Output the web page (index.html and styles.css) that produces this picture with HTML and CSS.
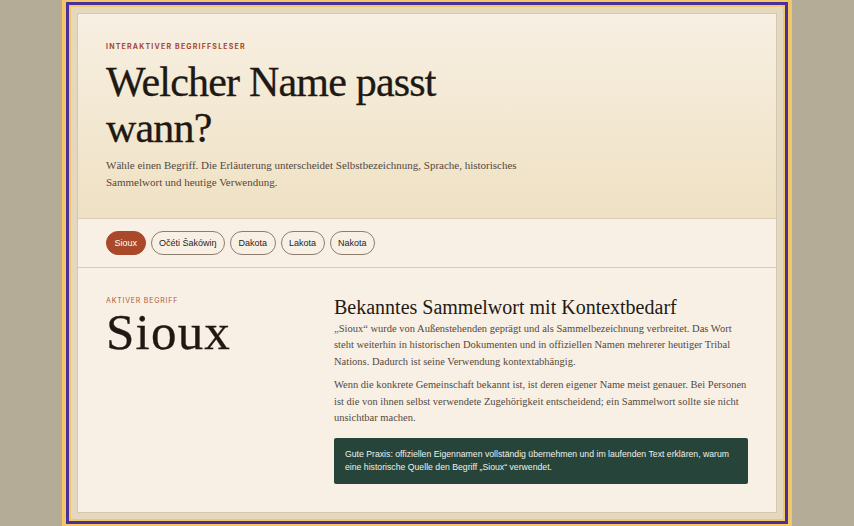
FILE: index.html
```html
<!DOCTYPE html>
<html lang="de">
<head>
<meta charset="utf-8">
<title>Welcher Name passt wann?</title>
<link rel="stylesheet" href="styles.css">
</head>
<body>
<div class="frame">
  <div class="ring">
    <div class="mat">
      <main class="card">
        <header class="hero">
          <p class="eyebrow">Interaktiver Begriffsleser</p>
          <h1 class="title">Welcher Name passt wann?</h1>
          <p class="lead">Wähle einen Begriff. Die Erläuterung unterscheidet Selbstbezeichnung, Sprache, historisches Sammelwort und heutige Verwendung.</p>
        </header>
        <nav class="tabs">
          <button class="pill active">Sioux</button>
          <button class="pill">Očéti Šakówiŋ</button>
          <button class="pill">Dakota</button>
          <button class="pill">Lakota</button>
          <button class="pill">Nakota</button>
        </nav>
        <section class="detail">
          <div class="term">
            <p class="term-label">Aktiver Begriff</p>
            <p class="term-name">Sioux</p>
          </div>
          <div class="explain">
            <h2 class="explain-title">Bekanntes Sammelwort mit Kontextbedarf</h2>
            <p class="body">„Sioux“ wurde von Außenstehenden geprägt und als Sammelbezeichnung verbreitet. Das Wort steht weiterhin in historischen Dokumenten und in offiziellen Namen mehrerer heutiger Tribal Nations. Dadurch ist seine Verwendung kontextabhängig.</p>
            <p class="body second">Wenn die konkrete Gemeinschaft bekannt ist, ist deren eigener Name meist genauer. Bei Personen ist die von ihnen selbst verwendete Zugehörigkeit entscheidend; ein Sammelwort sollte sie nicht unsichtbar machen.</p>
            <div class="note">Gute Praxis: offiziellen Eigennamen vollständig übernehmen und im laufenden Text erklären, warum eine historische Quelle den Begriff „Sioux“ verwendet.</div>
          </div>
        </section>
      </main>
    </div>
  </div>
</div>
</body>
</html>
```
FILE: styles.css
```css
html, body {
  margin: 0;
  padding: 0;
}
body {
  background: #b5ac97;
  font-family: "Liberation Serif", serif;
  overflow: hidden;
}
.frame {
  width: 730px;
  box-sizing: border-box;
  margin: -2px auto 0;
  border: 4px solid #f2c765;
}
.ring {
  border: 3px solid #4b2f9f;
}
.mat {
  border: 2px solid #f2c765;
  background: #e4d8c0;
  padding: 6px;
}
.card {
  display: block;
  border: 1px solid #d4c8af;
  background: #f8f0e5;
  min-height: 498px;
}
.hero {
  padding: 28px 28px 27px;
  background: linear-gradient(180deg, #f7efe2 0%, #efe1c3 100%);
  border-bottom: 1px solid #d8ccb6;
}
.eyebrow {
  margin: 0;
  font-family: Inter, "Liberation Sans", sans-serif;
  font-size: 7px;
  line-height: 10px;
  font-weight: 700;
  letter-spacing: 1.2px;
  text-transform: uppercase;
  color: #a9492a;
}
.title {
  margin: 7px 0 0;
  max-width: 380px;
  font-family: "Liberation Serif", serif;
  font-weight: 400;
  font-size: 42px;
  line-height: 46px;
  letter-spacing: -0.8px;
  color: #201812;
  -webkit-text-stroke: 0.3px #201812;
}
.lead {
  margin: 6px 0 0;
  max-width: 420px;
  font-size: 11px;
  line-height: 17px;
  color: #54483d;
}
.tabs {
  display: flex;
  gap: 5px;
  padding: 12px 28px 12px;
  border-bottom: 1px solid #d8ccb6;
}
.pill {
  height: 24px;
  padding: 0 7.5px;
  border: 1px solid #8c7d6d;
  border-radius: 12px;
  background: transparent;
  font-family: "Liberation Sans", Arial, sans-serif;
  font-size: 9px;
  color: #2a221c;
}
.pill.active {
  background: #a9492a;
  border-color: #a9492a;
  color: #fff;
}
.detail {
  display: grid;
  grid-template-columns: 204px 1fr;
  gap: 24px;
  padding: 28px 28px 28px;
}
.term-label {
  margin: 0;
  padding-top: 1px;
  font-family: Inter, "Liberation Sans", sans-serif;
  font-size: 7px;
  line-height: 8px;
  letter-spacing: 0.8px;
  text-transform: uppercase;
  color: #b0593a;
}
.term-name {
  margin: 7px 0 0;
  font-size: 51px;
  line-height: 40px;
  letter-spacing: 1.2px;
  color: #201812;
  -webkit-text-stroke: 0.3px #201812;
}
.explain-title {
  margin: 0;
  font-weight: 400;
  font-size: 20px;
  line-height: 22px;
  color: #231a14;
}
.body {
  margin: 3px 0 0;
  max-width: 414px;
  font-size: 10.5px;
  line-height: 16.4px;
  color: #54483d;
}
.body.second {
  margin-top: 7px;
}
.note {
  margin-top: 12px;
  width: 414px;
  box-sizing: border-box;
  padding: 10px 11px;
  background: #27443a;
  border-radius: 2px;
  font-family: "Liberation Sans", Arial, sans-serif;
  font-size: 8.7px;
  line-height: 13px;
  color: #eef0ea;
}
```
